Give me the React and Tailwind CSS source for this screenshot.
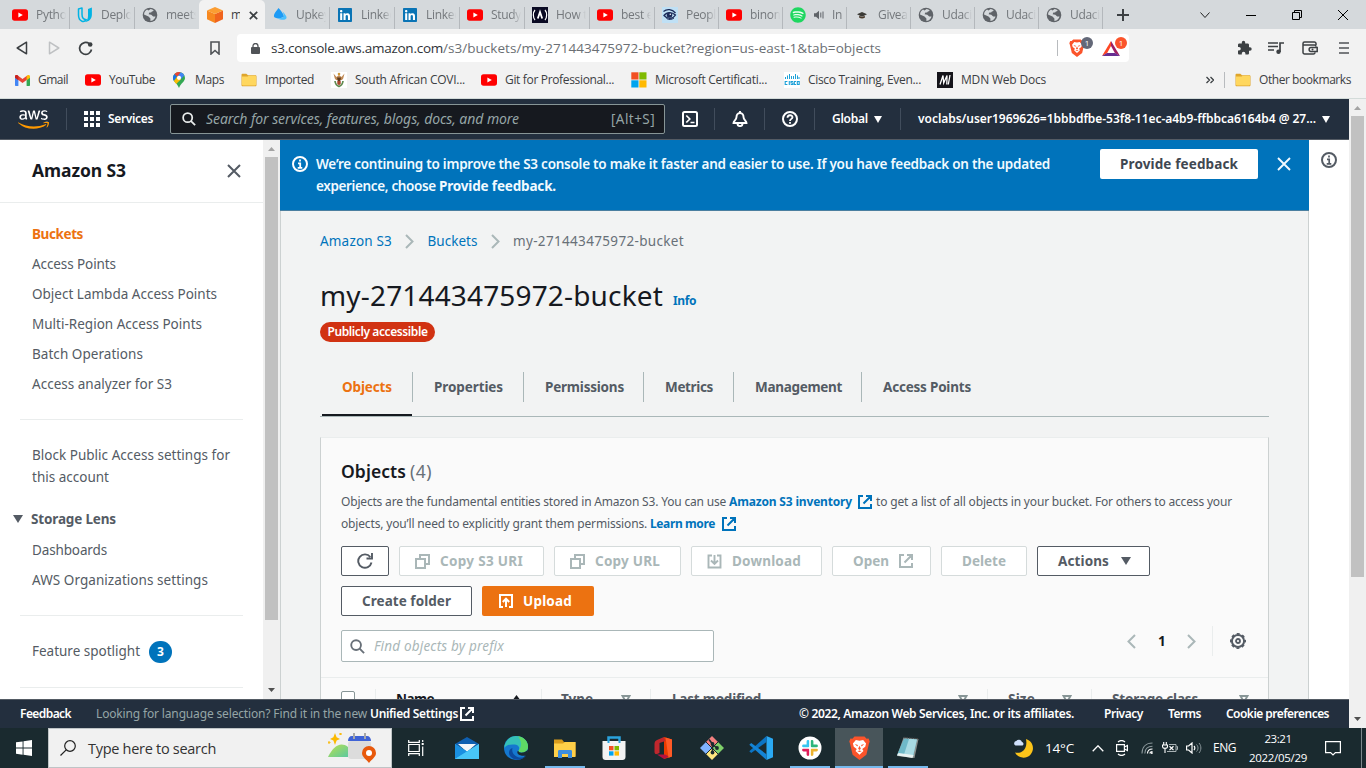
import { useLayoutEffect, useRef } from "react";
import { FaYoutube, FaLinkedin, FaSpotify, FaAws } from "react-icons/fa";

// Text set to a fixed measure: tracking is adjusted so the run fills `w` pixels.
function T({ w, className = "", children }) {
  const ref = useRef(null);
  useLayoutEffect(() => {
    const el = ref.current;
    el.style.letterSpacing = "0px";
    const natural = el.getBoundingClientRect().width;
    el.style.letterSpacing = `${(w - natural) / String(children).length}px`;
  }, [w, children]);
  return (
    <span ref={ref} className={`inline-block shrink-0 whitespace-pre ${className}`}>
      {children}
    </span>
  );
}

function Svg({ className = "", vb = "0 0 16 16", children }) {
  return (
    <svg viewBox={vb} className={`shrink-0 ${className}`} fill="none" xmlns="http://www.w3.org/2000/svg">
      {children}
    </svg>
  );
}

/* ---------- favicons ---------- */
const YouTube = () => (
  <Svg className="h-4 w-4">
    <rect y="2.3" width="16" height="11.4" rx="2.6" fill="#f00" />
    <path d="M6.4 5.4v5.2L10.8 8z" fill="#fff" />
  </Svg>
);
const Udacity = () => (
  <Svg className="h-4 w-4">
    <path d="M1.500 2 5 .9v6.300c0 3.400 1.600 5.300 4.300 5.500-1.200 1.500-2.800 2.100-4.300 1.500C2.500 13.200 1.500 11 1.500 8z" stroke="#02b3e4" strokeWidth="1.500" strokeLinejoin="round" />
    <path d="M11 1.900 14.900.6v7c0 4.200-2.900 7.400-6.900 7.400 2-1.500 3-3.400 3-6z" fill="#02b3e4" />
  </Svg>
);
const Globe = () => (
  <Svg className="h-4 w-4">
    <circle cx="8" cy="8" r="7.300" fill="#5f6368" />
    <path d="M8.600 1.900c1 .2 2.400.9 3.100 1.700L9.800 5.400H7.400L6.600 7.200l2.700.5 1.900 1.800h2.300c-.4 1.700-1.500 3.200-3.100 4L8.400 14v-2.600L6.500 9.500 2 7.500c.2-2.200 1.300-3.900 3-4.900l1.500.9z" fill="#d5d9dc" />
    <path d="m10 4.200 3.300 1.500.4 2.300-2.500-.3-2.300-1.400z" fill="#5f6368" />
  </Svg>
);
const Cube = () => (
  <Svg className="h-4 w-4">
    <path d="M0 3.600 8 7v9l-8-3.700z" fill="#f7881f" />
    <path d="M16 3.600 8 7v9l8-3.700z" fill="#f0641e" />
    <path d="M8 0 16 3.600 8 7 0 3.600z" fill="#fb9d32" />
  </Svg>
);
const Drop = () => (
  <Svg className="h-4 w-4">
    <path d="M6.500 1c2 2 5 5.500 5.500 8.500-1.500 1.500-4 2-7 1.700C2.500 11 1.500 9.700 2 8c.6-2.200 3-4.800 4.500-7z" fill="#1e9bf5" />
    <path d="M10.500 4.200c2 2.500 4.500 5 4 6.800-.5 2.300-5 2.500-9.500.2 3 .2 5.500-.3 7-1.700-.2-1.700-.8-3.500-1.500-5.300z" fill="#4cc0ff" />
  </Svg>
);
const LinkedIn = () => (
  <span className="flex h-4 w-4 shrink-0 items-center justify-center">
    <FaLinkedin className="h-4 w-4 bg-[linear-gradient(#fff,#fff)] bg-[length:10px_10px] bg-center bg-no-repeat text-[#0a74b5]" />
  </span>
);
const Camp = () => (
  <Svg className="h-4 w-4">
    <rect width="16" height="16" fill="#0a0a23" />
    <path d="M3 3C.8 5.500.8 10.500 3 13M13 3c2.200 2.500 2.200 7.500 0 10" stroke="#fff" strokeWidth="1.200" />
    <path d="M5.800 11.500 8 5l2.200 6.500" stroke="#fff" strokeWidth="1.800" />
  </Svg>
);
const Eye = () => (
  <Svg className="h-4 w-4">
    <rect width="16" height="16" fill="#bfe0f5" />
    <path d="M1.500 4.500C5 1.500 10 2 13.500 6M2 8.500c3-4 8-3.500 11.500-.5-3 4.500-8 4.500-11.500.5z" stroke="#1c2b5a" strokeWidth="1.300" />
    <circle cx="7.500" cy="8" r="2.800" fill="#1c2b5a" />
    <circle cx="8.300" cy="7.200" r=".8" fill="#fff" />
    <path d="M4.500 11.500c2.500 1.500 5 1.300 7.500-.5" stroke="#1c2b5a" />
  </Svg>
);
const Spotify = () => (
  <FaSpotify className="h-4 w-4 shrink-0 bg-[linear-gradient(#e9fff0,#e9fff0)] bg-[length:10px_9px] bg-center bg-no-repeat text-[#1ed760]" />
);
const Cap = () => (
  <Svg className="h-4 w-4">
    <path d="M3 7.300 8 5l5 2.300-5 2.400z" fill="#3b3a36" />
    <path d="M5.200 8.700v2c1.800 1.100 3.900 1.100 5.600 0v-2L8 10z" fill="#4a3a2a" />
  </Svg>
);
const Gmail = () => (
  <Svg className="h-[11px] w-[15px]" vb="0 0 15 11">
    <path d="M0 1.500V10c0 .6.4 1 1 1h2.400V4.600z" fill="#4285f4" />
    <path d="M15 1.500V10c0 .6-.4 1-1 1h-2.400V4.600z" fill="#34a853" />
    <path d="M0 1.500C0 0 1.600-.4 2.700.4L7.500 4 12.300.4v4L7.500 8 0 2.500z" fill="#ea4335" />
    <path d="M11.600 1 12.300.4C13.400-.4 15 0 15 1.500v1.200l-3.400 2.600z" fill="#fbbc04" />
    <path d="M0 1.500v1.200l3.400 2.600V1L2.700.4C1.600-.4 0 0 0 1.500z" fill="#c5221f" />
  </Svg>
);
const Maps = () => (
  <Svg className="h-4 w-3" vb="0 0 12 16">
    <path d="M6 0a6 6 0 0 0-6 6c0 3.500 4 5 6 10 2-5 6-6.500 6-10a6 6 0 0 0-6-6z" fill="#34a853" />
    <path d="M1.500 2.100A6 6 0 0 0 .9 9L4 5z" fill="#1a73e8" />
    <path d="M.9 9 4.200 4.500 8 7.300 3.200 12z" fill="#fbbc04" />
    <path d="M1.500 2.100 4.500 5 7.700.3A6 6 0 0 0 1.500 2.100z" fill="#ea4335" />
    <path d="M7.700.3A6 6 0 0 1 11.300 3.400L8 7 5 4z" fill="#4285f4" />
    <circle cx="6" cy="5.800" r="2.100" fill="#fff" />
  </Svg>
);
const Folder = () => (
  <Svg className="h-[14px] w-4" vb="0 0 16 14">
    <path d="M.5 2c0-.8.4-1.300 1.200-1.300h3.600L7 2.200h7.300c.8 0 1.200.4 1.200 1.200V12c0 .8-.4 1.300-1.200 1.300H1.700C.9 13.300.5 12.800.5 12z" fill="#dfa52c" />
    <path d="M1 3.600h5.600l1.200-.8h6.400c.5 0 .8.3.8.8v8c0 .5-.3.8-.8.8H1.800c-.5 0-.8-.3-.8-.8z" fill="#ffd75e" />
  </Svg>
);
const Arms = () => (
  <Svg className="h-4 w-4">
    <rect width="16" height="16" fill="#fff" />
    <path d="M2.500 1.500 5.500 5 8 3l2.500 2 3-3.500-1.300 5L11 8h-6L3.800 6.500z" fill="#c08a55" />
    <path d="M6 5.500h4L9.300 9H6.700z" fill="#5b3a1e" />
    <path d="M4 9c.3 2.500 1.300 4.500 4 5.500 2.700-1 3.700-3 4-5.500" stroke="#5f8a4f" strokeWidth="1.700" />
    <path d="M6.300 9h3.400v3L8 13.300 6.300 12z" fill="#a8452c" />
    <circle cx="8" cy="2" r="1.300" fill="#d09a3a" />
  </Svg>
);
const Microsoft = () => (
  <Svg className="h-4 w-4">
    <path d="M.3.300h7.200v7.200H.3z" fill="#f25022" />
    <path d="M8.300.300h7.200v7.200H8.300z" fill="#7fba00" />
    <path d="M.3 8.300h7.200v7.200H.3z" fill="#00a4ef" />
    <path d="M8.300 8.300h7.200v7.200H8.300z" fill="#ffb900" />
  </Svg>
);
const Cisco = () => (
  <Svg className="h-4 w-4">
    <rect width="16" height="16" fill="#fff" />
    <path d="M1.500 5v2M3.500 3.500V7M5.500 2v5M7.500 4V7M9.500 4v3M11.500 2V7M13.500 3.500v3.500M15 5V7" stroke="#1ba0d7" strokeWidth="1" />
    <path d="M3.400 9.500H1.200v3h2.200M5.300 9v4M9 9.500H7v1.500h1.900v1.500H6.700M12 9.500h-1.700v3H12M13.300 9.500h1.900v3h-1.900z" stroke="#1ba0d7" strokeWidth="1.100" />
  </Svg>
);
const Mdn = () => (
  <Svg className="h-4 w-4">
    <rect width="16" height="16" fill="#15141a" />
    <path d="M3 12.500 6 3.500 6.700 11 10 3.500 9.800 12.500M13 3l-1.700 9.500" stroke="#fff" strokeWidth="1.300" />
  </Svg>
);
const Shield = ({ className }) => (
  <Svg className={className} vb="0 0 20 23">
    <path d="M14.800.5H5.200L3.200 2.700 1.300 2.500.2 5.300l.7 2L3.400 18 10 23l6.600-5L19.100 7.300l.7-2L18.700 2.500l-1.900.2z" fill="#fb542b" />
    <path d="m10 4.500 3.500-.7 2.800 3.400-.8 3-2.900 2.300 1.200 1.800-1.600 1.600L10 18l-2.200-2.100-1.600-1.600 1.200-1.800-2.900-2.300-.8-3 2.800-3.400z" fill="#fff" />
    <path d="m5.500 7.700 3 .9-.6 1.500zM14.500 7.700l-3 .9.600 1.500zM10 9.300l1.300 3L10 13.300l-1.300-1zM7.900 14.500l2.100.9 2.100-.9-2.100-.6z" fill="#fb542b" />
  </Svg>
);

const Caret = ({ className = "" }) => (
  <Svg className={`h-[7px] w-[8px] ${className}`} vb="0 0 8 7">
    <path d="M0 0h8L4 7z" fill="currentColor" />
  </Svg>
);
const External = ({ className = "" }) => (
  <Svg className={className}>
    <path d="M6 2H2v12h12v-4M9 2h5v5M14 2 6.500 9.500" stroke="currentColor" strokeWidth="2" />
  </Svg>
);
const Magnifier = ({ className = "" }) => (
  <Svg className={className}>
    <circle cx="6.500" cy="6.500" r="5.200" stroke="currentColor" strokeWidth="2" />
    <path d="m10.300 10.300 4.700 4.700" stroke="currentColor" strokeWidth="2" />
  </Svg>
);

/* ---------- browser chrome ---------- */
const TABS = [
  { icon: YouTube, text: "Pytho", cls: "w-[65px]" },
  { icon: Udacity, text: "Deplo", cls: "w-[65px]" },
  { icon: Globe, text: "meets", cls: "w-[64px]", last: true },
  { icon: Cube, text: "m", active: true },
  { icon: Drop, text: "Upkey", cls: "w-[65px]" },
  { icon: LinkedIn, text: "Linked", cls: "w-[65px]" },
  { icon: LinkedIn, text: "Linked", cls: "w-[65px]" },
  { icon: YouTube, text: "Study", cls: "w-[65px]" },
  { icon: Camp, text: "How t", cls: "w-[65px]" },
  { icon: YouTube, text: "best e", cls: "w-[65px]" },
  { icon: Eye, text: "Peopl", cls: "w-[64px]" },
  { icon: YouTube, text: "binom", cls: "w-[64px]" },
  { icon: Spotify, text: "In", cls: "w-[64px]", sound: true },
  { icon: Cap, text: "Givea", cls: "w-[64px]" },
  { icon: Globe, text: "Udaci", cls: "w-[64px]" },
  { icon: Globe, text: "Udaci", cls: "w-[64px]" },
  { icon: Globe, text: "Udaci", cls: "w-[64px]" },
];

function TabStrip() {
  return (
    <div className="flex h-[29px] bg-[#d5d9dc] pl-[5px] font-['Open_Sans',sans-serif] text-[12px] text-[#74787c]">
      {TABS.map((t, i) =>
        t.active ? (
          <div key={i} className="flex w-[66px] items-center rounded-t-[5px] bg-[#f2f2f2] pt-[1px] pl-2 text-[#3c4043]">
            <t.icon />
            <span className="ml-2 w-[9px] overflow-hidden">m</span>
            <Svg className="ml-[9px] h-[9px] w-[9px]" vb="0 0 9 9">
              <path d="m.8.8 7.400 7.400M8.200.8.8 8.200" stroke="#3c4043" strokeWidth="1.700" />
            </Svg>
          </div>
        ) : (
          <div key={i} className={`flex items-center pt-[1px] pl-[7px] ${t.cls}`}>
            <t.icon />
            {t.sound && (
              <Svg className="ml-2 h-[10px] w-[10px]" vb="0 0 10 10">
                <path d="M0 3.300h2L5 .8v8.400L2 6.700H0z" fill="#5f6368" />
                <path d="M6.800 2.500v5M9 1.500v7" stroke="#5f6368" />
              </Svg>
            )}
            <span
              className={`ml-2 overflow-hidden tracking-[-0.3px] whitespace-nowrap [mask-image:linear-gradient(to_right,black_70%,transparent)] ${
                t.sound ? "w-[13px]" : "w-[30px]"
              }`}
            >
              {t.text}
            </span>
            {!t.last && <span className="ml-auto h-[22px] w-px self-end bg-[#b4b8bc]" />}
          </div>
        )
      )}
      <div className="flex items-center pt-[1px]">
        <Svg className="ml-[14px] h-3 w-3" vb="0 0 12 12">
          <path d="M6 0v12M0 6h12" stroke="#3c4043" strokeWidth="2" />
        </Svg>
        <Svg className="ml-[71px] h-[10px] w-[10px]" vb="0 0 10 10">
          <path d="m.5 2.500 4.500 5 4.500-5" stroke="#222" />
        </Svg>
        <span className="ml-[36px] h-px w-[10px] bg-black" />
        <Svg className="ml-[36px] h-[10px] w-[10px]" vb="0 0 10 10">
          <path d="M.5 2.500h7v7h-7zM2.500 2.500v-2h7v7h-2" stroke="#000" />
        </Svg>
        <Svg className="ml-[36px] h-[10px] w-[10px]" vb="0 0 10 10">
          <path d="m0 0 10 10M10 0 0 10" stroke="#000" />
        </Svg>
      </div>
    </div>
  );
}

function Toolbar() {
  return (
    <div className="flex h-[38px] items-center bg-[#f2f2f2] font-['Open_Sans',sans-serif]">
      <Svg className="ml-4 h-[14px] w-3" vb="0 0 12 14">
        <path d="M10.500 1.200v11.600L1.200 7z" stroke="#3c4043" strokeWidth="1.500" strokeLinejoin="round" />
      </Svg>
      <Svg className="ml-5 h-[14px] w-3" vb="0 0 12 14">
        <path d="M1.500 1.200v11.600L10.800 7z" stroke="#bfc1c3" strokeWidth="1.500" strokeLinejoin="round" />
      </Svg>
      <Svg className="ml-[18px] h-[15px] w-[15px]" vb="0 0 15 15">
        <path d="M13.500 8.500A6 6 0 1 1 11.300 2.700" stroke="#3c4043" strokeWidth="1.700" />
        <circle cx="12.200" cy="3.500" r="2.300" fill="#3c4043" />
      </Svg>
      <Svg className="ml-[117px] h-[14px] w-[10px]" vb="0 0 10 14">
        <path d="M1 1h8v12L5 9.500 1 13z" stroke="#505357" strokeWidth="1.600" />
      </Svg>
      <div className="ml-[17px] flex h-7 w-[892px] items-center rounded bg-white text-[13.500px]">
        <Svg className="ml-[14px] h-[11px] w-[9px]" vb="0 0 9 11">
          <rect y="4" width="9" height="7" rx="1" fill="#505357" />
          <path d="M2 4.500V3a2.500 2.500 0 0 1 5 0v1.500" stroke="#505357" strokeWidth="1.300" />
        </Svg>
        <T w={172} className="ml-[11px] text-[#303338]">s3.console.aws.amazon.com</T>
        <T w={438} className="text-[#6b6f74]">/s3/buckets/my-271443475972-bucket?region=us-east-1&tab=objects</T>
        <span className="ml-auto h-4 w-px bg-[#b8bbbe]" />
        <div className="relative ml-[11px] h-5 w-6">
          <Shield className="mt-[1px] h-[18px] w-4" />
          <span className="absolute -top-[1px] left-3 flex h-3 w-3 items-center justify-center rounded-full bg-[#636878] text-[8px] text-white">1</span>
        </div>
        <div className="relative mr-[2px] ml-[9px] h-5 w-[25px]">
          <Svg className="mt-[3px] h-[15px] w-[18px]" vb="0 0 18 15">
            <path d="M9 0 0 15l5-2.800L9 5z" fill="#ff4724" />
            <path d="m9 0 9 15-5-2.800L9 5z" fill="#9e1f63" />
            <path d="M0 15h18l-5-3H5z" fill="#662d91" />
          </Svg>
          <span className="absolute -top-[1px] left-[13px] flex h-3 w-3 items-center justify-center rounded-full bg-[#fb542b] text-[8px] text-white">1</span>
        </div>
      </div>
      <Svg className="ml-[107px] h-4 w-4">
        <path d="M14 7.300h-1V4.800c0-.8-.6-1.400-1.400-1.400H9.200v-1a1.700 1.700 0 0 0-3.400 0v1H3.300c-.7 0-1.300.6-1.300 1.400V7h1a1.800 1.800 0 0 1 0 3.600H2v2.600c0 .7.600 1.300 1.300 1.300h2.500v-1a1.800 1.800 0 0 1 3.600 0v1h2.200c.8 0 1.400-.6 1.400-1.300v-2.500h1a1.700 1.700 0 0 0 0-3.400z" fill="#3c4043" />
      </Svg>
      <Svg className="ml-4 h-4 w-4">
        <path d="M0 3h10M0 6.500h10M0 10h6" stroke="#3c4043" strokeWidth="1.500" />
        <path d="M12 12V3h4" stroke="#3c4043" strokeWidth="1.700" />
        <circle cx="10.500" cy="11.700" r="2.200" fill="#3c4043" />
      </Svg>
      <Svg className="ml-[18px] h-4 w-4">
        <path d="M14 5V3.500A1.500 1.500 0 0 0 12.500 2h-10A1.500 1.500 0 0 0 1 3.500v9A1.500 1.500 0 0 0 2.500 14h9A1.500 1.500 0 0 0 13 12.500M1 5h11.500A1.500 1.500 0 0 1 14 6.500M9 7.500h6.200v4H9c-2.500 0-2.500-4 0-4z" stroke="#3c4043" strokeWidth="1.500" />
        <circle cx="10.500" cy="9.500" r="1" fill="#3c4043" />
      </Svg>
      <Svg className="ml-[21px] h-3 w-[10px]" vb="0 0 10 12">
        <path d="M0 1h10M0 6h10M0 11h10" stroke="#505357" strokeWidth="1.700" />
      </Svg>
    </div>
  );
}

const BOOKMARKS = [
  { icon: Gmail, gap: "ml-[15px]", tgap: "ml-2", text: "Gmail", w: 30 },
  { icon: YouTube, gap: "ml-[17px]", tgap: "ml-2", text: "YouTube", w: 46 },
  { icon: Maps, gap: "ml-[18px]", tgap: "ml-[10px]", text: "Maps", w: 29 },
  { icon: Folder, gap: "ml-[17px]", tgap: "ml-2", text: "Imported", w: 49 },
  { icon: Arms, gap: "ml-[17px]", tgap: "ml-2", text: "South African COVI...", w: 110 },
  { icon: YouTube, gap: "ml-4", tgap: "ml-2", text: "Git for Professional...", w: 109 },
  { icon: Microsoft, gap: "ml-[17px]", tgap: "ml-2", text: "Microsoft Certificati...", w: 112 },
  { icon: Cisco, gap: "ml-[17px]", tgap: "ml-2", text: "Cisco Training, Even...", w: 113 },
  { icon: Mdn, gap: "ml-4", tgap: "ml-2", text: "MDN Web Docs", w: 85 },
];

function Bookmarks() {
  return (
    <div className="flex h-8 items-center border-b border-[#d3dbd9] bg-[#f2f2f2] pb-[5px] font-['Open_Sans',sans-serif] text-[12px] text-[#3c4043]">
      {BOOKMARKS.map((b) => (
        <div key={b.text} className={`flex items-center ${b.gap}`}>
          <b.icon />
          <T w={b.w} className={b.tgap}>{b.text}</T>
        </div>
      ))}
      <div className="mr-[15px] ml-auto flex items-center">
        <Svg className="h-2 w-2" vb="0 0 8 8">
          <path d="m.5 1 3 3-3 3M4.500 1l3 3-3 3" stroke="#3c4043" strokeWidth="1.300" />
        </Svg>
        <span className="mr-[10px] ml-[10px] h-4 w-px bg-[#b8bbbe]" />
        <Folder />
        <T w={92} className="ml-2">Other bookmarks</T>
      </div>
    </div>
  );
}

/* ---------- AWS header ---------- */
const Divider = ({ className = "" }) => <span className={`h-[22px] w-px shrink-0 bg-[#414d5c] ${className}`} />;

function AwsHeader() {
  return (
    <header className="flex h-[41px] items-center border-b border-[#545b64] bg-[#232f3e] text-[12px] font-semibold text-white">
      <Svg className="h-0 w-0">
        <defs>
          <linearGradient id="aws" x1="0" y1="0" x2="0" y2="1">
            <stop offset=".63" stopColor="#fff" />
            <stop offset=".63" stopColor="#ff9900" />
          </linearGradient>
        </defs>
      </Svg>
      <FaAws fill="url(#aws)" className="ml-[18px] h-[25px] w-[31px] shrink-0" />
      <Divider className="ml-[17px]" />
      <Svg className="ml-[17px] h-4 w-4">
        <path d="M0 0h4v4H0zM6 0h4v4H6zM12 0h4v4h-4zM0 6h4v4H0zM6 6h4v4H6zM12 6h4v4h-4zM0 12h4v4H0zM6 12h4v4H6zM12 12h4v4h-4z" fill="#fff" />
      </Svg>
      <T w={45} className="ml-2">Services</T>
      <div className="ml-[17px] flex h-[30px] w-[495px] items-center rounded-[2px] border border-[#879596] bg-[#16191f] font-normal">
        <Magnifier className="ml-[11px] h-[14px] w-[14px] text-[#eaeded]" />
        <T w={313} className="ml-[10px] -mt-px text-[14px] text-[#95a5a6] italic">Search for services, features, blogs, docs, and more</T>
        <T w={44} className="mr-[9px] ml-auto text-[13.500px] text-[#95a5a6]">[Alt+S]</T>
      </div>
      <Svg className="ml-[17px] h-4 w-4">
        <rect x="1" y="1" width="14" height="14" rx="1.500" stroke="#fff" strokeWidth="2" />
        <path d="m4.300 4.500 3.500 3.500-3.500 3.500M8.500 11.500h4" stroke="#fff" strokeWidth="1.700" />
      </Svg>
      <Divider className="ml-4" />
      <Svg className="ml-[17px] h-4 w-4">
        <path d="M8 0v2M8 2C5.500 2 4.500 4 4.500 6 4.500 9 1.500 9.500 1.500 12h13c0-2.500-3-3-3-6 0-2-1-4-3.500-4zM5.500 12.500C5.500 16 10.500 16 10.500 12.500" stroke="#fff" strokeWidth="1.900" />
      </Svg>
      <Divider className="ml-4" />
      <Svg className="ml-[17px] h-4 w-4">
        <circle cx="8" cy="8" r="7" stroke="#fff" strokeWidth="2" />
        <path d="M5.500 6.800C5.500 3.500 10.500 3.500 10.500 6.300 10.500 8 8 7.800 8 10M8 11v1.800" stroke="#fff" strokeWidth="1.800" />
      </Svg>
      <Divider className="ml-4" />
      <T w={36} className="ml-[17px]">Global</T>
      <Caret className="ml-[6px]" />
      <Divider className="ml-[18px]" />
      <T w={398} className="ml-[17px]">voclabs/user1969626=1bbbdfbe-53f8-11ec-a4b9-ffbbca6164b4 @ 27...</T>
      <Caret className="ml-[6px]" />
    </header>
  );
}

/* ---------- sidebar ---------- */
const Rule = ({ className }) => <div className={`ml-5 h-px w-[223px] bg-[#eaeded] ${className}`} />;

function Sidebar() {
  const main = [
    ["Access Points", 84],
    ["Object Lambda Access Points", 185],
    ["Multi-Region Access Points", 170],
    ["Batch Operations", 111],
    ["Access analyzer for S3", 140],
  ];
  return (
    <aside className="flex w-[280px] shrink-0">
      <nav className="w-[263px] bg-white text-[13.500px] text-[#545b64]">
        <div className="flex h-[63px] items-center border-b border-[#eaeded] pl-8">
          <T w={94} className="-mt-[2px] text-[17.500px] font-bold text-[#16191f]">Amazon S3</T>
          <Svg className="ml-[101px] h-[14px] w-[14px]" vb="0 0 14 14">
            <path d="m1 1 12 12M13 1 1 13" stroke="#545b64" strokeWidth="2" />
          </Svg>
        </div>
        <div className="flex flex-col pt-4 pl-8">
          <div className="flex h-[30px] items-center">
            <T w={51} className="font-bold text-[#ec7211]">Buckets</T>
          </div>
          {main.map(([t, w]) => (
            <div key={t} className="flex h-[30px] items-center">
              <T w={w}>{t}</T>
            </div>
          ))}
        </div>
        <Rule className="mt-5" />
        <div className="mt-6 flex flex-col pl-8">
          <div className="flex h-[22px] items-center"><T w={198}>Block Public Access settings for</T></div>
          <div className="flex h-[22px] items-center"><T w={77}>this account</T></div>
        </div>
        <div className="mt-4 flex h-[30px] items-center pl-[13px]">
          <Svg className="h-2 w-[10px]" vb="0 0 10 8"><path d="M0 0h10L5 8z" fill="#545b64" /></Svg>
          <T w={85} className="ml-2 font-bold">Storage Lens</T>
        </div>
        <div className="flex h-8 items-center pl-8"><T w={75}>Dashboards</T></div>
        <div className="flex h-7 items-center pl-8"><T w={176}>AWS Organizations settings</T></div>
        <Rule className="mt-[21px]" />
        <div className="mt-[25px] flex h-[22px] items-center pl-8">
          <T w={108} className="-mt-px">Feature spotlight</T>
          <span className="ml-[9px] flex h-[22px] w-[23px] items-center justify-center rounded-full bg-[#0073bb] text-[12px] font-bold text-white">3</span>
        </div>
        <Rule className="mt-6" />
      </nav>
      <div className="flex w-[17px] flex-col items-center bg-[#f0f0f0]">
        <Svg className="mt-[7px] h-1 w-[7px]" vb="0 0 7 4"><path d="M3.500 0 7 4H0z" fill="#a3a3a3" /></Svg>
        <div className="mt-[6px] mr-[1px] h-[463px] w-[13px] bg-[#c1c1c1]" />
        <Svg className="mt-auto mb-[7px] h-1 w-[7px]" vb="0 0 7 4"><path d="M0 0h7L3.500 4z" fill="#505050" /></Svg>
      </div>
    </aside>
  );
}

/* ---------- bucket page ---------- */
function Banner() {
  return (
    <div className="flex h-[71px] w-[1029px] shrink-0 border-b border-[#4b7fa0] bg-[#0073bb] text-[13.500px] text-[#f1faff]">
      <Svg className="mt-4 ml-3 h-4 w-4">
        <circle cx="8" cy="8" r="7" stroke="#fff" strokeWidth="2" />
        <path d="M8 3.500v2M6 7.300h2.200V11.500M5.700 11.800h4.600" stroke="#fff" strokeWidth="1.800" />
      </Svg>
      <div className="mt-[13px] ml-2 flex flex-col font-semibold">
        <div className="flex h-[22px] items-center">
          <T w={734}>We’re continuing to improve the S3 console to make it faster and easier to use. If you have feedback on the updated</T>
        </div>
        <div className="flex h-[22px] items-center">
          <T w={123}>experience, choose </T>
          <T w={117} className="font-bold">Provide feedback.</T>
        </div>
      </div>
      <div className="mt-[9px] ml-[50px] flex h-[30px] w-[158px] items-center justify-center rounded-[2px] bg-white text-[#3f4751]">
        <T w={118} className="font-bold">Provide feedback</T>
      </div>
      <Svg className="mt-[17px] ml-[19px] h-[14px] w-[14px]" vb="0 0 14 14">
        <path d="m1 1 12 12M13 1 1 13" stroke="#f1faff" strokeWidth="1.900" />
      </Svg>
    </div>
  );
}

const Chevron = ({ className = "", flip }) => (
  <Svg className={`h-[15px] w-[9px] ${className}`} vb="0 0 9 15">
    <path d={flip ? "M8 1 1.500 7.500 8 14" : "M1 1 7.500 7.500 1 14"} stroke="#aab7b8" strokeWidth="2" />
  </Svg>
);

const BUCKET_TABS = [
  ["Objects", 50, "w-[93px] pl-[22px]"],
  ["Properties", 69, "w-[111px] pl-[21px]"],
  ["Permissions", 79, "w-[120px] pl-[21px]"],
  ["Metrics", 48, "w-[90px] pl-[21px]"],
  ["Management", 87, "w-[128px] pl-[21px]"],
  ["Access Points", 88, "w-[110px] pl-[21px]"],
];

function Button({ className = "", children, disabled }) {
  return (
    <div
      className={`flex h-[30px] shrink-0 items-center rounded-[2px] border bg-white font-bold ${
        disabled ? "border-[#d5dbdb] text-[#aab7b8]" : "border-[#545b64] text-[#545b64]"
      } ${className}`}
    >
      {children}
    </div>
  );
}

const Copy = () => (
  <Svg className="h-[15px] w-[15px]" vb="0 0 15 15">
    <path d="M1 5h9v9H1zM5 5V1h9v9h-4" stroke="currentColor" strokeWidth="2" />
  </Svg>
);

const COLUMNS = [
  ["Name", 38, "w-[166px] pl-[21px]"],
  ["Type", 32, "w-[109px] pl-[20px]"],
  ["Last modified", 89, "w-[337px] pl-[22px]"],
  ["Size", 27, "w-[104px] pl-[21px]"],
  ["Storage class", 86, "w-[177px] pl-[21px]"],
];

function ObjectsCard() {
  return (
    <section className="mt-5 h-[300px] w-[949px] border border-[#ccd1d1] border-t-[#eaeded] bg-[#fafafa] pt-5 text-[13.500px]">
      <div className="-mt-px flex h-[28px] items-center pl-5 text-[17.500px]">
        <T w={65} className="font-semibold text-[#16191f]">Objects</T>
        <T w={22} className="ml-1 text-[#687078]">(4)</T>
      </div>
      <div className="mt-[6px] flex h-[22px] items-center pl-5 text-[12px] text-[#545b64]">
        <T w={388}>Objects are the fundamental entities stored in Amazon S3. You can use </T>
        <T w={123} className="font-bold text-[#0073bb]">Amazon S3 inventory</T>
        <External className="ml-[5px] h-4 w-4 text-[#0073bb]" />
        <T w={356} className="ml-[3px]">to get a list of all objects in your bucket. For others to access your</T>
      </div>
      <div className="flex h-[22px] items-center pl-5 text-[12px] text-[#545b64]">
        <T w={309}>objects, you’ll need to explicitly grant them permissions. </T>
        <T w={65} className="font-bold text-[#0073bb]">Learn more</T>
        <External className="ml-[6px] h-4 w-4 text-[#0073bb]" />
      </div>
      <div className="mt-[11px] flex gap-[10px] pl-5">
        <Button className="w-12 justify-center">
          <Svg className="h-4 w-4">
            <path d="M14.500 9.500A6.700 6.700 0 1 1 13.300 4M15 0v5.500H9.500" stroke="currentColor" strokeWidth="1.900" />
          </Svg>
        </Button>
        <Button disabled className="w-[145px] gap-[10px] pl-[15px]"><Copy /><T w={83}>Copy S3 URI</T></Button>
        <Button disabled className="w-[127px] gap-[10px] pl-[15px]"><Copy /><T w={65}>Copy URL</T></Button>
        <Button disabled className="w-[131px] gap-[10px] pl-[15px]">
          <Svg className="h-[15px] w-[15px]" vb="0 0 15 15">
            <path d="M5 1.500H1.500v12h12v-12H10M7.500 1v8.500M4 6.500 7.500 10 11 6.500" stroke="currentColor" strokeWidth="1.900" />
          </Svg>
          <T w={69}>Download</T>
        </Button>
        <Button disabled className="w-[99px] gap-[9px] pl-5"><T w={36}>Open</T><External className="h-4 w-4" /></Button>
        <Button disabled className="w-[86px] justify-center"><T w={44}>Delete</T></Button>
        <Button className="w-[113px] pl-5">
          <T w={51}>Actions</T>
          <Svg className="ml-3 h-2 w-[10px]" vb="0 0 10 8"><path d="M0 0h10L5 8z" fill="currentColor" /></Svg>
        </Button>
      </div>
      <div className="mt-[10px] flex gap-[10px] pl-5">
        <Button className="w-[131px] justify-center"><T w={89}>Create folder</T></Button>
        <div className="flex h-[30px] w-[112px] items-center gap-[9px] rounded-[2px] bg-[#ec7211] pl-4 font-bold text-white">
          <Svg className="h-4 w-4">
            <path d="M5 14H2V2h12v12h-3M8 14V6M4.800 9 8 5.700 11.200 9" stroke="currentColor" strokeWidth="2" />
          </Svg>
          <T w={49}>Upload</T>
        </div>
      </div>
      <div className="flex h-[62px] border-b border-[#eaeded] pl-5">
        <div className="mt-[14px] flex h-8 w-[373px] items-center rounded-[2px] border border-[#aab7b8] bg-white">
          <Magnifier className="ml-2 h-[15px] w-[15px] text-[#687078]" />
          <T w={130} className="ml-[9px] text-[#aab7b8] italic">Find objects by prefix</T>
        </div>
        <div className="mt-[10px] ml-[413px] flex h-[30px] items-center">
          <Chevron flip />
          <span className="ml-[22px] w-2 font-bold text-[#16191f]">1</span>
          <Chevron className="ml-[21px]" />
          <span className="ml-[16px] h-[30px] w-px bg-[#eaeded]" />
          <Svg className="ml-[17px] h-4 w-4">
            <circle cx="8" cy="8" r="6.100" stroke="#545b64" strokeWidth="2" />
            <circle cx="8" cy="8" r="7.200" stroke="#545b64" strokeWidth="1.600" strokeDasharray="3 2.655" strokeDashoffset="1.500" />
            <circle cx="8" cy="8" r="2" stroke="#545b64" strokeWidth="1.800" />
          </Svg>
        </div>
      </div>
      <div className="flex h-11 pl-5 text-[#545b64]">
        <div className="flex w-[34px]">
          <span className="mt-[13px] h-[14px] w-[14px] rounded-[2px] border border-[#879596] bg-white" />
        </div>
        {COLUMNS.map(([t, w, cls], i) => (
          <div key={t} className={`relative flex ${cls}`}>
            <span className="absolute top-[11px] left-0 h-6 w-px bg-[#eaeded]" />
            <T w={w} className={`mt-[11px] font-bold leading-5 ${i === 0 ? "text-[#16191f]" : ""}`}>{t}</T>
            {i === 0 ? (
              <Svg className="mt-[17px] mr-[20px] ml-auto h-[8px] w-[9px]" vb="0 0 9 8"><path d="M4.500 0 9 6H0z" fill="#16191f" /></Svg>
            ) : (
              <Svg className="mt-[17px] mr-[19px] ml-auto h-[9px] w-[10px]" vb="0 0 10 9">
                <path d="M1.500 1h7L5 7z" stroke="#879596" strokeWidth="1.900" />
              </Svg>
            )}
          </div>
        ))}
      </div>
    </section>
  );
}

function BucketPage() {
  return (
    <main className="flex w-[1029px] flex-col overflow-hidden">
      <Banner />
      <div className="min-h-0 flex-1 overflow-hidden border-x border-[#ccd1d1] bg-[#f2f3f3] pl-[39px] text-[13.500px]">
        <div className="mt-[19px] flex h-[22px] items-center">
          <T w={72} className="text-[#0073bb]">Amazon S3</T>
          <Chevron className="ml-[13px]" />
          <T w={50} className="ml-[13.500px] text-[#0073bb]">Buckets</T>
          <Chevron className="ml-[13px]" />
          <T w={171} className="ml-[13.500px] text-[#687078]">my-271443475972-bucket</T>
        </div>
        <div className="mt-[24px] flex h-[40px] items-center">
          <T w={343} className="-mt-[3px] text-[28px] leading-10 text-[#16191f]">my-271443475972-bucket</T>
          <T w={23} className="mt-[9px] ml-[10px] text-[12px] font-bold text-[#0073bb]">Info</T>
        </div>
        <div className="mt-[6px] flex h-5 w-[115px] items-center justify-center rounded-full bg-[#d13212] text-[12px] font-semibold text-white">
          <T w={100}>Publicly accessible</T>
        </div>
        <div className="mt-[15px] flex h-[60px] w-[949px] border-b border-[#aab7b8] font-bold text-[#545b64]">
          {BUCKET_TABS.map(([t, w, cls], i) => (
            <div key={t} className={`relative flex h-[60px] items-start pt-[15px] ${cls}`}>
              <span className="flex h-[30px] items-center">
                <T w={w} className={i === 0 ? "text-[#ec7211]" : ""}>{t}</T>
              </span>
              {i < 5 && <span className="absolute top-[15px] right-0 h-[30px] w-px bg-[#aab7b8]" />}
              {i === 0 && <span className="absolute bottom-[1px] left-[2px] h-[2px] w-[90px] bg-[#16191f]" />}
            </div>
          ))}
        </div>
        <ObjectsCard />
      </div>
    </main>
  );
}

function AwsFooter() {
  return (
    <footer className="flex h-[29px] shrink-0 items-center border-t border-[#545b64] bg-[#232f3e] text-[12px] font-semibold text-white">
      <T w={51} className="ml-5">Feedback</T>
      <T w={274} className="ml-[25px] font-normal text-[#95a5a6]">Looking for language selection? Find it in the new </T>
      <T w={88}>Unified Settings</T>
      <External className="ml-px h-4 w-4" />
      <T w={275} className="ml-auto">© 2022, Amazon Web Services, Inc. or its affiliates.</T>
      <T w={39} className="ml-[30px]">Privacy</T>
      <T w={33} className="ml-[25px]">Terms</T>
      <T w={103} className="mr-5 ml-[25px]">Cookie preferences</T>
    </footer>
  );
}

/* ---------- taskbar ---------- */
const APPS = [
  <Svg className="h-6 w-6" vb="0 0 24 24">
    <path d="M0 8 12 1l12 7-12 7z" fill="#0f5fb0" />
    <path d="M3 8h18l-9 8z" fill="#f4f6f8" />
    <path d="M0 8l12 7.500L24 8v15H0z" fill="#35b8f1" />
    <path d="m0 23 12-7.500L0 8z" fill="#1a8fe0" />
    <path d="M0 23 24 8v15z" fill="#48c5f7" />
  </Svg>,
  <Svg className="h-6 w-6" vb="0 0 24 24">
    <circle cx="12" cy="12" r="12" fill="#1578cf" />
    <path d="M.5 9.500C2.500 3 7 0 12 0c7 0 12 5 12 10.500 0 4-3 6-6 6-2.500 0-4-1-3.500-2 1.500-1.500 1-5.500-3.500-6C6 8 2 9 .5 12z" fill="#35c1b8" />
    <path d="M14 .2C20 1 24 5.500 24 10.500c0 4-3 6-6 6-2.500 0-4-1-3.500-2 3-3.500 4-8-.5-14.300z" fill="#5fd965" />
    <path d="M8.500 12c-1.500 5 3 9.500 8.500 9.500 2.500 0 4-1 5.200-1.800C18 25 9.500 25 6 20c-2-3-1-7 2.500-8z" fill="#0c4a9e" />
    <path d="M14.300 14.500c-.3 1.500 2 2.300 4 2.100 2.500-.2 4.500-1.500 5.300-3.100.5 2.500 0 4.500-1.200 6-3 .7-7 .3-8.600-1.800-.8-1-.6-2.600.5-3.200z" fill="#1a2a30" />
  </Svg>,
  <Svg className="h-6 w-6" vb="0 0 24 24">
    <path d="M1 3.500h8l2 2.500h11.500v14H1z" fill="#d99b1c" />
    <path d="M1 7.500h9l2-1.500h10.500v15H1z" fill="#ffcf48" />
    <path d="M5 21v-5.500C5 14.500 5.500 14 6.500 14h11c1 0 1.500.5 1.500 1.500V22h-4v-4H9v4H5z" fill="#3e8ede" />
  </Svg>,
  <Svg className="h-6 w-6" vb="0 0 24 24">
    <path d="M6.500 7V1.500h11V7" stroke="#2aa3dd" strokeWidth="2.500" />
    <path d="M.5 5h23v16c0 1.700-1.200 3-3 3h-17c-1.800 0-3-1.300-3-3z" fill="#f3f3f3" />
    <path d="M6.500 5v2M17.500 5v2" stroke="#2aa3dd" strokeWidth="2" />
    <path d="M7 10h4.500v4.300H7z" fill="#f25022" /><path d="M12.500 10H17v4.300h-4.500z" fill="#7fba00" />
    <path d="M7 15.300h4.500v4.300H7z" fill="#00a4ef" /><path d="M12.500 15.300H17v4.300h-4.500z" fill="#ffb900" />
  </Svg>,
  <Svg className="h-6 w-6" vb="0 0 24 24">
    <path d="m13 1 8 2.500v17L13 23z" fill="#eb3b00" />
    <path d="M13 1 6 4c-1.700.8-2.500 2-2.500 4v8c0 1.500 1 2.500 2.500 2l2.500-1V7l6-2z" fill="#c0272d" />
    <path d="M6 18.500h8l4 2L13 23z" fill="#b7113d" />
    <path d="M14.500 1.500 21 3.500v17l-3.500 1.200z" fill="#ff5a26" />
  </Svg>,
  <Svg className="h-6 w-6" vb="0 0 24 24">
    <path d="m12 0 6 6-6 6-6-6z" fill="#f38080" />
    <path d="m18 6 6 6-6 6-6-6z" fill="#7fd06a" />
    <path d="m6 6 6 6-6 6-6-6z" fill="#80b3ff" />
    <path d="m12 12 6 6-6 6-6-6z" fill="#ffe680" />
    <path d="M9 3.500 12.500 8v9M12 8l5 4" stroke="#1a2a30" strokeWidth="1.600" />
    <circle cx="12.500" cy="8" r="1.900" fill="#1a2a30" /><circle cx="12.500" cy="16.500" r="1.900" fill="#1a2a30" /><circle cx="17" cy="12" r="1.900" fill="#1a2a30" />
    <path d="m6 6 6 6 6-6M6 18l6-6 6 6" stroke="#1a2a30" strokeWidth="1" />
  </Svg>,
  <Svg className="h-6 w-6" vb="0 0 24 24">
    <path d="M17.500 0 24 2.800v18.400L17.500 24z" fill="#2aa9f3" />
    <path d="M17.500 0 .3 15.300l1.900 1.800L17.500 6z" fill="#0b74c4" />
    <path d="M.3 8.800 2.200 7 17.500 18.200V24z" fill="#1484d6" />
  </Svg>,
  <Svg className="h-6 w-6" vb="0 0 24 24">
    <circle cx="12" cy="12" r="11.500" fill="#fff" />
    <g strokeWidth="2.800" strokeLinecap="round">
      <path d="M10 5.500v4.500M5.500 10H10" stroke="#36c5f0" />
      <path d="M14 5.500V10M14 10h4.500" stroke="#2eb67d" />
      <path d="M14 14v4.500M14 14h4.500" stroke="#ecb22e" />
      <path d="M10 14v4.500M5.500 14H10" stroke="#e01e5a" />
    </g>
    <path d="M12 4v16M4 12h16" stroke="#fff" strokeWidth="1.200" />
  </Svg>,
  <Shield className="h-6 w-[21px]" />,
  <Svg className="h-6 w-6" vb="0 0 24 24">
    <path d="m7.500 1.500 15 1.500L18.500 22 1 20z" fill="#8a8f8e" />
    <path d="M8 2.500 21 3l-4 18L1 19z" fill="#6fb9c9" />
    <path d="m13 3 8 .3L17 20l-9-1.500z" fill="#a9dbe4" />
    <path d="M2.500 17 17.500 19l-1 3L1 19.500z" fill="#e9f3f3" />
    <path d="m8 1.500 14.500 1.300" stroke="#444" strokeWidth="1.300" strokeDasharray="1.500 1" />
  </Svg>,
];
const APP_STATE = ["", "", "open", "", "", "", "", "open", "active", "open"];

function Taskbar() {
  return (
    <div className="flex h-10 bg-[#1a2a2f] font-['Open_Sans',sans-serif] text-white">
      <div className="flex w-12 items-center justify-center">
        <Svg className="h-4 w-4">
          <path d="M0 2.300 6.600 1.400v6.200H0zM7.500 1.200 16 0v7.600H7.500zM0 8.500h6.600v6.200L0 13.800zM7.500 8.500H16V16l-8.500-1.200z" fill="#fff" />
        </Svg>
      </div>
      <div className="flex w-[344px] items-center border border-[#bfc4c6] bg-[#f1f1f1]">
        <Svg className="ml-[11px] h-4 w-4">
          <circle cx="10" cy="6" r="5.300" stroke="#222" strokeWidth="1.200" />
          <path d="M6.200 9.800.5 15.500" stroke="#222" strokeWidth="1.200" />
        </Svg>
        <T w={128} className="mt-[2px] ml-3 text-[14.500px] text-[#333]">Type here to search</T>
        <Svg className="ml-[112px] h-[30px] w-12" vb="0 0 48 30">
          <defs>
            <linearGradient id="hill" x1="0" y1="0" x2="1" y2="1"><stop stopColor="#b8e04e" /><stop offset="1" stopColor="#5cc9a0" /></linearGradient>
          </defs>
          <path d="M0 24C5 14 12 8 20 14v10z" fill="url(#hill)" />
          <rect x="20" y="8" width="23" height="18" rx="3" fill="#dcdcdc" />
          <path d="M20 8c0-3 1.500-5 4-5h15c2.500 0 4 2 4 5z" fill="#3f63d6" />
          <path d="M26 0v6M37 0v6" stroke="#a8a8a8" strokeWidth="2" />
          <path d="M7 0 8.600 4.200 12 6 8.600 7.500 7 12 5.400 7.500 2 6l3.400-1.800z" fill="#fbb900" />
          <path d="m11.500 1 1-1 1 1-1 1zM0 9.500l1-1 1 1-1 1z" fill="#fbb900" stroke="#fbb900" />
          <path d="M41 13a7 7 0 0 0-7 7c0 4 4 6 7 10 3-4 7-6 7-10a7 7 0 0 0-7-7z" fill="#e8590c" />
          <circle cx="41" cy="20" r="3" fill="#fff" />
        </Svg>
      </div>
      <div className="flex w-12 items-center justify-center">
        <Svg className="h-4 w-4">
          <path d="M.7 4.500h10.600v7H.7zM.7 0v2.300h10.600V0M.7 16v-2.300h10.600V16M14.700 0v2M14.700 6.500V16" stroke="#fff" strokeWidth="1.200" />
          <path d="M13.700 3h2v2h-2z" fill="#fff" />
        </Svg>
      </div>
      <div className="ml-[3px] flex gap-px">
        {APPS.map((app, i) => (
          <div
            key={i}
            className={`flex h-10 w-12 flex-col items-center ${APP_STATE[i] === "active" ? "bg-[#48555a]" : ""}`}
          >
            <div className="flex h-[38px] items-center pt-[2px]">{app}</div>
            {APP_STATE[i] === "open" && <span className="h-[2px] w-10 bg-[#76b9ed]" />}
            {APP_STATE[i] === "active" && <span className="h-[2px] w-12 bg-[#76b9ed]" />}
          </div>
        ))}
      </div>
      <div className="ml-auto flex items-center">
        <Svg className="h-5 w-5" vb="0 0 20 20">
          <path d="M12 1a9.500 9.500 0 1 1-11 13.500C8 16 14 11 12 1z" fill="#fcc419" />
          <path d="M1.500 7.500a2.300 2.300 0 0 1 .8-4.400 3.200 3.200 0 0 1 5.700.9 1.900 1.900 0 0 1 .5 3.500z" fill="#cfe0fb" />
        </Svg>
        <T w={29} className="mt-px ml-[11px] text-[13.500px]">14°C</T>
        <Svg className="ml-[18px] h-[7px] w-3" vb="0 0 12 7"><path d="m.7 6.300 5.300-5.500 5.300 5.500" stroke="#fff" strokeWidth="1.300" /></Svg>
        <Svg className="ml-3 h-4 w-3" vb="0 0 12 16">
          <path d="M.6 4.600h7.800v6.800H.6zM8.400 7l3-1.500v5l-3-1.500M2 2C4 .3 7 .3 9 2M2 14c2 1.700 5 1.700 7 0" stroke="#fff" strokeWidth="1.200" />
        </Svg>
        <Svg className="ml-[13px] h-3 w-3" vb="0 0 12 12">
          <path d="M1 11.500C1 5 5 1 11.500 1M3.800 11.500c0-4.500 3-7.200 7.700-7.200" stroke="#8b979b" strokeWidth="1.100" />
          <path d="M6.500 11.500c0-2.500 2-4.500 5-4.500M9 11.500c0-1 1-2 2.500-2" stroke="#fff" strokeWidth="1.200" />
          <circle cx="10.800" cy="11" r="1" fill="#fff" />
        </Svg>
        <Svg className="ml-[9px] h-3 w-4" vb="0 0 16 12">
          <path d="M1.700 0v3M4.300 0v3M.5 3h5v1.500c0 2.500-5 2.500-5 0zM3 6.500V11" stroke="#fff" strokeWidth="1.100" />
          <path d="M7 2.500h7v7H5M14.500 4.500h1v3h-1" stroke="#a9b2b5" />
          <path d="m7.500 4.300 4 3.800M11.500 4.300l-4 3.800" stroke="#fff" strokeWidth="1.200" />
        </Svg>
        <Svg className="ml-2 h-3 w-4" vb="0 0 16 12">
          <path d="M.6 4h2L6 1v10L2.600 8h-2zM8 4c1 1.200 1 2.800 0 4" stroke="#fff" strokeWidth="1.200" />
          <path d="M10.500 2.500c2 2 2 5 0 7M13 1c2.500 3 2.500 7 0 10" stroke="#8b979b" />
        </Svg>
        <T w={23} className="ml-[11px] text-[12px]">ENG</T>
        <div className="ml-[13px] flex w-[58px] flex-col items-center text-[11.500px] leading-[19px]">
          <T w={27}>23:21</T>
          <T w={58}>2022/05/29</T>
        </div>
        <Svg className="ml-[18px] h-4 w-4">
          <path d="M.6 1.600h14.800v11h-5L8 15l-2.400-2.400h-5z" stroke="#fff" strokeWidth="1.200" />
        </Svg>
        <span className="mr-1 ml-[20px] h-10 w-px bg-[#7c888c]" />
      </div>
    </div>
  );
}

export default function App() {
  return (
    <div className="flex h-[768px] w-[1366px] flex-col overflow-hidden bg-white">
      <TabStrip />
      <Toolbar />
      <Bookmarks />
      <div className="flex h-[629px] font-['Noto_Sans',sans-serif]">
        <div className="flex w-[1349px] flex-col">
          <AwsHeader />
          <div className="flex h-[559px]">
            <Sidebar />
            <BucketPage />
            <div className="flex w-10 justify-center bg-white pt-3">
              <Svg className="h-4 w-4">
                <circle cx="8" cy="8" r="7" stroke="#545b64" strokeWidth="2" />
                <path d="M8 3.500v2M6 7.300h2.200V11.500M5.700 11.800h4.600" stroke="#545b64" strokeWidth="1.700" />
              </Svg>
            </div>
          </div>
          <AwsFooter />
        </div>
        <div className="flex w-[17px] flex-col items-center bg-[#f0f0f0]">
          <Svg className="mt-[7px] h-1 w-[7px]" vb="0 0 7 4"><path d="M3.500 0 7 4H0z" fill="#a3a3a3" /></Svg>
          <div className="mt-[6px] h-[461px] w-[13px] bg-[#c1c1c1]" />
          <Svg className="mt-auto mb-[7px] h-1 w-[7px]" vb="0 0 7 4"><path d="M0 0h7L3.500 4z" fill="#505050" /></Svg>
        </div>
      </div>
      <Taskbar />
    </div>
  );
}
